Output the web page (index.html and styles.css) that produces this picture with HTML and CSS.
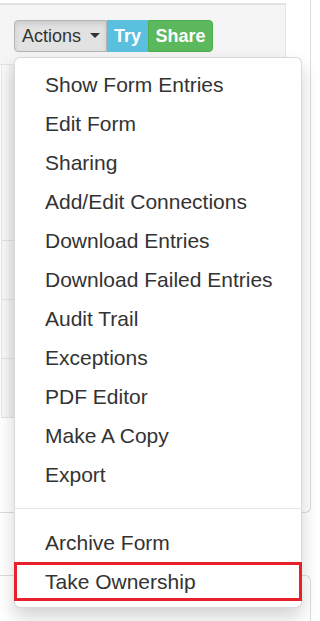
FILE: index.html
```html
<!DOCTYPE html>
<html>

	<head>

		<meta charset="UTF-8">
		<link rel="stylesheet" href="styles.css">
		<title>Forms - Actions</title>

	</head>

	<body>

		<div class="card">
			<div class="toolbar">
				<div class="btn-group">
					<button class="btn btn-actions">Actions <span class="caret"></span></button>
					<button class="btn btn-try">Try</button>
					<button class="btn btn-share">Share</button>
				</div>
			</div>

			<div class="side">
				<div class="side-row side-row-tall"><span class="side-mark side-mark-first"></span></div>
				<div class="side-row"><span class="side-mark"></span></div>
				<div class="side-row"><span class="side-mark"></span></div>
				<div class="side-row"></div>
			</div>

			<ul class="dropdown-menu">
				<li><a class="menu-item">Show Form Entries</a></li>
				<li><a class="menu-item">Edit Form</a></li>
				<li><a class="menu-item">Sharing</a></li>
				<li><a class="menu-item">Add/Edit Connections</a></li>
				<li><a class="menu-item">Download Entries</a></li>
				<li><a class="menu-item">Download Failed Entries</a></li>
				<li><a class="menu-item">Audit Trail</a></li>
				<li><a class="menu-item">Exceptions</a></li>
				<li><a class="menu-item">PDF Editor</a></li>
				<li><a class="menu-item">Make A Copy</a></li>
				<li><a class="menu-item">Export</a></li>
				<li class="divider"></li>
				<li><a class="menu-item">Archive Form</a></li>
				<li><a class="menu-item menu-item-marked">Take Ownership</a></li>
			</ul>
		</div>

		<div class="card-next"></div>

	</body>
</html>
```

FILE: styles.css
```css
body {
	margin: 0;
	background: #fff;
	font-family: "Liberation Sans", Arial, sans-serif;
	color: #333;
	overflow: hidden;
}
.card {
	position: relative;
	width: 310px;
	height: 509px;
	padding-top: 3px;
	border-right: 1px solid #dcdcdc;
	border-bottom: 1px solid #dcdcdc;
	border-bottom-right-radius: 6px;
	box-sizing: content-box;
}
.toolbar {
	width: 286px;
	height: 62px;
	background: #f5f5f5;
	border-top: 2px solid #e3e3e3;
	border-right: 1px solid #e3e3e3;
	border-bottom: 1px solid #e3e3e3;
	padding: 15px 0 0 14px;
	box-sizing: border-box;
}
.btn-group {
	display: flex;
}
.btn {
	height: 32px;
	font-family: "Liberation Sans", Arial, sans-serif;
	font-size: 18px;
	line-height: 30px;
	padding: 0;
	margin: 0;
	border: 1px solid transparent;
	box-sizing: border-box;
	text-align: center;
}
.btn-actions {
	width: 93px;
	text-align: left;
	padding-left: 7px;
	color: #333;
	background: #e2e2e2;
	border-color: #b4b4b4;
	border-radius: 4px 0 0 4px;
	box-shadow: inset 0 3px 5px rgba(0, 0, 0, 0.1);
}
.caret {
	display: inline-block;
	width: 0;
	height: 0;
	margin-left: 4px;
	vertical-align: middle;
	border-top: 5px solid #333;
	border-left: 5px solid transparent;
	border-right: 5px solid transparent;
	position: relative;
	top: -2px;
}
.btn-try {
	width: 41px;
	color: #fff;
	font-weight: bold;
	background: #5bc0de;
	border-color: #5bc0de;
}
.btn-share {
	width: 65px;
	color: #fff;
	font-weight: bold;
	background: #5cb85c;
	border-color: #4cae4c;
	border-radius: 0 4px 4px 0;
}
.side {
	width: 14px;
	border-left: 1px solid #e3e3e3;
	margin-left: 1px;
}
.side-row {
	position: relative;
	height: 58px;
	border-right: 1px solid #dedede;
	border-bottom: 1px solid #e0e0e0;
	background: linear-gradient(to right, #fafafa, #ececec);
}
.side-row-tall {
	height: 175px;
}
.side-mark {
	position: absolute;
	right: -1px;
	top: 14px;
	width: 1px;
	height: 30px;
	background: #b8b8b8;
}
.side-mark-first {
	top: 16px;
	height: 28px;
}
.dropdown-menu {
	position: absolute;
	top: 57px;
	left: 14px;
	width: 288px;
	margin: 0;
	padding: 7px 0 6px;
	list-style: none;
	background: #fff;
	border: 1px solid rgba(0, 0, 0, 0.15);
	border-radius: 6px;
	box-shadow: 0 9px 18px rgba(0, 0, 0, 0.175);
	box-sizing: border-box;
}
.menu-item {
	display: block;
	height: 39px;
	line-height: 39px;
	padding-left: 30px;
	font-size: 21px;
	color: #333;
	white-space: nowrap;
}
.menu-item-marked {
	margin: 0 -1px;
	line-height: 33px;
	padding-left: 28px;
	border: 3px solid #e8202a;
	box-sizing: border-box;
}
.divider {
	height: 1px;
	margin: 14px 0;
	background: #e5e5e5;
}
.card-next {
	margin-top: 62px;
	width: 310px;
	height: 60px;
	border-top: 1px solid #dcdcdc;
	border-right: 1px solid #dcdcdc;
	border-top-right-radius: 6px;
}
```
